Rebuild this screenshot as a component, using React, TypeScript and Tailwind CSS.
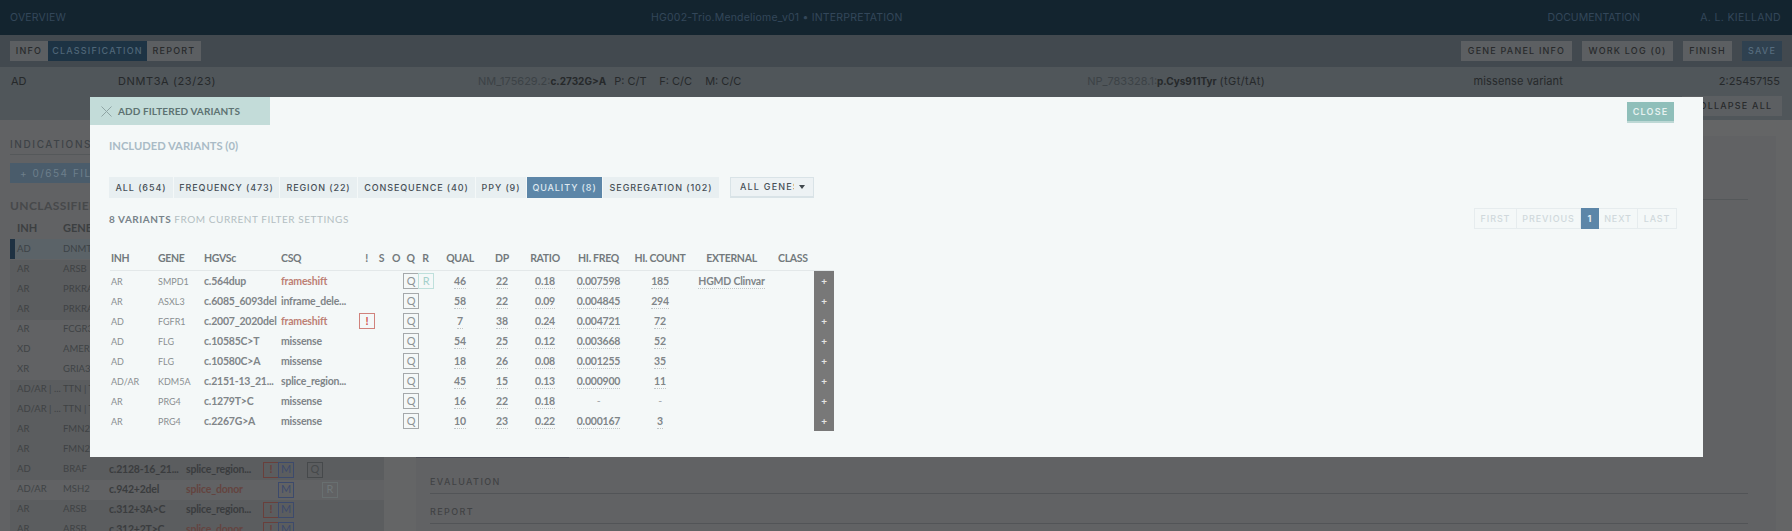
const grid = "grid grid-cols-[46px_46px_77px_80px_15px_15px_14px_15px_15px_54px_30px_56px_51px_72px_71px_47px_20px]";

const filterTabs = [
  { label: "ALL (654)", width: "w-[65px]" },
  { label: "FREQUENCY (473)", width: "w-[106px]" },
  { label: "REGION (22)", width: "w-[78px]" },
  { label: "CONSEQUENCE (40)", width: "w-[118px]" },
  { label: "PPY (9)", width: "w-[51px]" },
  { label: "QUALITY (8)", width: "w-[76px]", active: true },
  { label: "SEGREGATION (102)", width: "w-[117px]" },
];

const variants = [
  { inh: "AR", gene: "SMPD1", hgvs: "c.564dup", csq: "frameshift", red: true, r: true, qual: "46", dp: "22", ratio: "0.18", freq: "0.007598", count: "185", ext: "HGMD Clinvar" },
  { inh: "AR", gene: "ASXL3", hgvs: "c.6085_6093del", csq: "inframe_dele...", qual: "58", dp: "22", ratio: "0.09", freq: "0.004845", count: "294" },
  { inh: "AD", gene: "FGFR1", hgvs: "c.2007_2020del", csq: "frameshift", red: true, warn: true, qual: "7", dp: "38", ratio: "0.24", freq: "0.004721", count: "72" },
  { inh: "AD", gene: "FLG", hgvs: "c.10585C>T", csq: "missense", qual: "54", dp: "25", ratio: "0.12", freq: "0.003668", count: "52" },
  { inh: "AD", gene: "FLG", hgvs: "c.10580C>A", csq: "missense", qual: "18", dp: "26", ratio: "0.08", freq: "0.001255", count: "35" },
  { inh: "AD/AR", gene: "KDM5A", hgvs: "c.2151-13_21...", csq: "splice_region...", qual: "45", dp: "15", ratio: "0.13", freq: "0.000900", count: "11" },
  { inh: "AR", gene: "PRG4", hgvs: "c.1279T>C", csq: "missense", qual: "16", dp: "22", ratio: "0.18", freq: "-", count: "-" },
  { inh: "AR", gene: "PRG4", hgvs: "c.2267G>A", csq: "missense", qual: "10", dp: "23", ratio: "0.22", freq: "0.000167", count: "3" },
];

// rows of the list behind the modal
const backgroundRows = [
  { inh: "AR", gene: "ARSB", dark: true },
  { inh: "AR", gene: "PRKRA", dark: true },
  { inh: "AR", gene: "PRKRA", dark: true },
  { inh: "AR", gene: "FCGR3" },
  { inh: "XD", gene: "AMER1" },
  { inh: "XR", gene: "GRIA3" },
  { inh: "AD/AR | ...", gene: "TTN | T", dark: true },
  { inh: "AD/AR | ...", gene: "TTN | T", dark: true },
  { inh: "AR", gene: "FMN2", dark: true },
  { inh: "AR", gene: "FMN2", dark: true },
  { inh: "AD", gene: "BRAF", hgvs: "c.2128-16_21...", csq: "splice_region...", bang: true, m: true, q: true, dark: true },
  { inh: "AD/AR", gene: "MSH2", hgvs: "c.942+2del", csq: "splice_donor", red: true, m: true, r: true },
  { inh: "AR", gene: "ARSB", hgvs: "c.312+3A>C", csq: "splice_region...", bang: true, m: true, dark: true },
  { inh: "AR", gene: "ARSB", hgvs: "c.312+2T>C", csq: "splice_donor", red: true, bang: true, m: true, dark: true },
];

function DarkButton({ children, width, tone = "plain" }: { children: string; width: string; tone?: "plain" | "active" | "save" }) {
  const colours = {
    plain: "bg-[#5c5f62] text-[#282a2c]",
    active: "bg-[#1d3344] text-[#4f6678]",
    save: "bg-[#2f4150] text-[#566c7e]",
  };
  return (
    <div className={`${width} h-[20px] flex items-center justify-center whitespace-nowrap text-[9px] font-medium tracking-[1.2px] ${colours[tone]}`}>
      {children}
    </div>
  );
}

function Dotted({ children }: { children: string }) {
  return <span className="border-b border-dotted border-[#c3c7c8] leading-[14px] inline-block">{children}</span>;
}

function Badge({ children, className }: { children: string; className: string }) {
  return <div className={`w-[16px] h-[16px] border flex items-center justify-center text-[11px] ${className}`}>{children}</div>;
}

function Page() {
  return (
    <div className="w-[1792px] h-[531px] flex flex-col bg-[#646566] font-['Inter',sans-serif]">
      <div className="h-[35px] shrink-0 bg-[#13242f] flex items-center text-[10.5px] text-[#33475a] pl-[10px] pr-[11px]">
        <span className="w-[641px] tracking-[0.2px]">OVERVIEW</span>
        <span className="tracking-[0.2px]">HG002-Trio.Mendeliome_v01 • INTERPRETATION</span>
        <div className="flex-1 flex justify-end gap-[60px]">
          <span>DOCUMENTATION</span>
          <span className="tracking-[0.35px]">A. L. KIELLAND</span>
        </div>
      </div>
      <div className="h-[32px] shrink-0 bg-[#42494f] flex items-center justify-between px-[10px]">
        <div className="flex">
          <DarkButton width="w-[38px]">INFO</DarkButton>
          <DarkButton width="w-[99px]" tone="active">CLASSIFICATION</DarkButton>
          <DarkButton width="w-[54px]">REPORT</DarkButton>
        </div>
        <div className="flex gap-[10px]">
          <DarkButton width="w-[111px]">GENE PANEL INFO</DarkButton>
          <DarkButton width="w-[91px]">WORK LOG (0)</DarkButton>
          <DarkButton width="w-[49px]">FINISH</DarkButton>
          <DarkButton width="w-[40px]" tone="save">SAVE</DarkButton>
        </div>
      </div>
      <div className="h-[53px] shrink-0 bg-[#50565a] relative text-[11px] text-[#26292b] px-[10px] pt-[7px]">
        <div className="flex items-center h-[14px]">
          <span className="w-[108px] pl-[1px]">AD</span>
          <span className="w-[360px] tracking-[0.6px]">DNMT3A (23/23)</span>
          <span className="text-[#3c4246]">NM_175629.2:</span>
          <span className="font-bold text-[10px]">c.2732G&gt;A</span>
          <span className="ml-[8px] w-[45px]">P: C/T</span>
          <span className="w-[46px]">F: C/C</span>
          <span className="w-[382px]">M: C/C</span>
          <span className="text-[#3c4246]">NP_783328.1:</span>
          <span className="font-bold text-[10px]">p.Cys911Tyr</span>
          <span className="ml-[3px] w-[254px] tracking-[0.4px]">(tGt/tAt)</span>
          <span className="flex-1 tracking-[0.1px]">missense variant</span>
          <span className="pr-[2px]">2:25457155</span>
        </div>
        <div className="flex justify-end mt-[8px]">
          <DarkButton width="w-[100px]">COLLAPSE ALL</DarkButton>
        </div>
      </div>
      <div className="flex-1 flex min-h-0 overflow-hidden">
        <div className="w-[384px] shrink-0 pl-[10px] pt-[18px] bg-[#616264]">
          <div className="text-[10px] font-medium tracking-[1.6px] text-[#3e4347] border-b border-[#55585a] pb-[5px] h-[17px] leading-[12px]">INDICATIONS OVERVIEW</div>
          <div className="mt-[8px] w-[120px] h-[20px] bg-[#4a5c6b] text-[10px] text-[#6d7f8c] tracking-[1.5px] flex items-center pl-[10px] whitespace-nowrap">+ 0/654 FILTERED</div>
          <div className="mt-[14px] text-[12px] font-['Lato',sans-serif] font-bold text-[#47494b] tracking-[0.4px] h-[16px]">UNCLASSIFIED VARIANTS</div>
          <div className="mt-[7px] h-[19px] flex text-[11px] font-['Lato',sans-serif] font-bold text-[#3c3f41]">
            <span className="w-[53px] pl-[7px]">INH</span>
            <span>GENE</span>
          </div>
          <div className="h-[20px] bg-[#5b6368] border-l-[5px] border-[#1e3142] flex items-center text-[9.5px] text-[#3c4246] font-['Lato',sans-serif] mb-[0.5px]">
            <span className="w-[48px] pl-[2px]">AD</span>
            <span>DNMT3A</span>
          </div>
          {backgroundRows.map((row, i) => (
            <div key={i} className={`h-[20px] flex items-center text-[9.5px] text-[#3f4244] font-['Lato',sans-serif] ${row.dark ? "bg-[#5b5d5f]" : ""}`}>
              <span className="w-[53px] shrink-0 pl-[7px] whitespace-nowrap overflow-hidden">{row.inh}</span>
              <span className="w-[46px] shrink-0">{row.gene}</span>
              <span className="w-[77px] shrink-0 text-[10.5px] font-bold whitespace-nowrap tracking-[-0.2px] text-[#3a3c3e]">{row.hgvs}</span>
              <span className={`w-[77px] shrink-0 text-[10.5px] font-bold whitespace-nowrap tracking-[-0.2px] ${row.red ? "text-[#64443f]" : "text-[#3a3c3e]"}`}>{row.csq}</span>
              <div className="w-[15px] shrink-0">{row.bang && <Badge className="border-[#693f3b] text-[#693f3b] font-bold">!</Badge>}</div>
              <div className="w-[29px] shrink-0">{row.m && <Badge className="border-[#3c4a6c] text-[#3c4a6c]">M</Badge>}</div>
              <div className="w-[15px] shrink-0">{row.q && <Badge className="border-[#46494b] text-[#46494b]">Q</Badge>}</div>
              <div className="w-[15px] shrink-0">{row.r && <Badge className="border-[#686f70] text-[#6f7678]">R</Badge>}</div>
            </div>
          ))}
        </div>
        <div className="w-[32px] shrink-0" />
        <div className="flex-1 pl-[14px] pr-[28px] bg-[#616264] mt-[16px]">
          <div className="h-[64px] border-b border-[#55585a]" />
          <div className="h-[256px]" />
          <div className="h-[2px] w-[153px] -ml-[14px] bg-[#4c4e56]" />
          <div className="h-[36px] border-b border-[#525457] text-[9px] tracking-[1.4px] text-[#414345] font-medium flex items-end pb-[5px]">EVALUATION</div>
          <div className="h-[30px] border-b border-[#525457] text-[9px] tracking-[1.4px] text-[#414345] font-medium flex items-end pb-[5px]">REPORT</div>
        </div>
        <div className="w-[16px] shrink-0" />
      </div>
    </div>
  );
}

function Modal() {
  return (
    <div className="absolute left-[90px] top-[97px] w-[1613px] h-[360px] bg-[#f4f8f8] font-['Lato',sans-serif]">
      <div className="flex justify-between items-start">
        <div className="w-[180px] h-[28px] bg-[#c3dcd9] flex items-center pl-[11px] text-[#5d7272]">
          <svg width="11" height="11" viewBox="0 0 11 11" className="mr-[6px]" fill="none" stroke="#8fa5a4" strokeWidth="1">
            <path d="M0.5 0.5 L10.5 10.5 M10.5 0.5 L0.5 10.5" />
          </svg>
          <span className="text-[10px] font-bold tracking-[0.1px] whitespace-nowrap">ADD FILTERED VARIANTS</span>
        </div>
        <div className="mt-[5px] mr-[29px] w-[47px] h-[21px] bg-[#8fbfba] border-b-2 border-[#bdd8d5] flex items-center justify-center text-[9px] font-['Inter',sans-serif] font-semibold tracking-[1.2px] text-[#e6f1f0]">
          CLOSE
        </div>
      </div>
      <div className="pl-[19px] pr-[27px]">
        <div className="mt-[13px] h-[16px] leading-[16px] text-[11.2px] font-bold text-[#a9bbc6]">INCLUDED VARIANTS (0)</div>
        <div className="mt-[23px] flex items-center">
          <div className="flex h-[21px] bg-[#e8eff1]">
            {filterTabs.map((t) => (
              <div
                key={t.label}
                className={`${t.width} border-r border-[#f4f8f8] flex items-center justify-center text-[9px] font-['Inter',sans-serif] font-medium tracking-[0.9px] whitespace-nowrap ${t.active ? "bg-[#5c86a8] text-[#dfe9f0]" : "text-[#475057]"}`}
              >
                {t.label}
              </div>
            ))}
          </div>
          <div className="ml-[10px] w-[84px] h-[21px] bg-[#edf2f4] border border-[#d9e3e7] border-b-2 flex items-center pl-[9px] font-['Inter',sans-serif] text-[9px] font-medium tracking-[1.2px] text-[#475057] whitespace-nowrap">
            <span className="w-[54px] overflow-hidden">ALL GENES</span>
            <span className="ml-[5px] border-x-[3.5px] border-t-[4px] border-x-transparent border-t-[#3f474d]" />
          </div>
        </div>
        <div className="mt-[10px] flex items-center justify-between h-[21px]">
          <div className="pt-[2px] text-[10px] tracking-[0.55px] text-[#b3bec2] whitespace-nowrap">
            <span className="font-bold text-[#78838a]">8 VARIANTS</span> FROM CURRENT FILTER SETTINGS
          </div>
          <div className="flex h-[21px] font-['Inter',sans-serif] text-[9px] font-medium tracking-[0.9px] text-[#d0d8dc] mr-[-1px]">
            <div className="w-[43px] border border-[#e6ecee] flex items-center justify-center">FIRST</div>
            <div className="w-[64px] border-y border-r border-[#e6ecee] flex items-center justify-center">PREVIOUS</div>
            <div className="w-[18px] bg-[#5c86a8] text-[#e4edf3] font-bold flex items-center justify-center">1</div>
            <div className="w-[39px] border-y border-r border-[#e6ecee] flex items-center justify-center">NEXT</div>
            <div className="w-[39px] border-y border-r border-[#e6ecee] flex items-center justify-center">LAST</div>
          </div>
        </div>
        <div className="mt-[19px] ml-[1px] w-[724px] text-[#737a7d]">
          <div className={`${grid} h-[23px] text-[10.5px] tracking-[-0.3px] font-bold items-center border-b border-[#e3e8e9] pb-[1px]`}>
            <span className="pl-[1px]">INH</span>
            <span className="pl-[2px]">GENE</span>
            <span className="pl-[2px]">HGVSc</span>
            <span className="pl-[2px]">CSQ</span>
            <span className="text-center">!</span>
            <span className="text-center">S</span>
            <span className="text-center">O</span>
            <span className="text-center">Q</span>
            <span className="text-center">R</span>
            <span className="text-center">QUAL</span>
            <span className="text-center">DP</span>
            <span className="text-center">RATIO</span>
            <span className="text-center whitespace-nowrap">HI. FREQ</span>
            <span className="text-center whitespace-nowrap">HI. COUNT</span>
            <span className="text-center">EXTERNAL</span>
            <span className="pl-[11px]">CLASS</span>
          </div>
          {variants.map((v, i) => (
            <div key={i} className={`${grid} h-[20px] items-center text-[10.5px] tracking-[-0.2px] font-bold text-[#808588]`}>
              <span className="pl-[1px] pt-[1px] text-[9px] font-normal tracking-normal text-[#8a8f91]">{v.inh}</span>
              <span className="pl-[2px] pt-[1px] text-[9px] font-normal tracking-normal text-[#8a8f91]">{v.gene}</span>
              <span className="pl-[2px] pt-[1px] whitespace-nowrap">{v.hgvs}</span>
              <span className={`pl-[2px] pt-[1px] whitespace-nowrap ${v.red ? "text-[#bd8074]" : ""}`}>{v.csq}</span>
              <div>{v.warn && <Badge className="border-[#d0827c] text-[#d0524c] font-bold">!</Badge>}</div>
              <div />
              <div />
              <div><Badge className="border-[#a5a9ab] text-[#8d9395] font-normal">Q</Badge></div>
              <div>{v.r && <Badge className="border-[#bfe0dc] text-[#a4d0cb] font-normal">R</Badge>}</div>
              <div className="text-center pt-[1px]"><Dotted>{v.qual}</Dotted></div>
              <div className="text-center pt-[1px]"><Dotted>{v.dp}</Dotted></div>
              <div className="text-center pt-[1px]"><Dotted>{v.ratio}</Dotted></div>
              <div className="text-center pt-[1px]">{v.freq === "-" ? <span className="font-normal text-[#a5a9ab]">-</span> : <Dotted>{v.freq}</Dotted>}</div>
              <div className="text-center pt-[1px]">{v.count === "-" ? <span className="font-normal text-[#a5a9ab]">-</span> : <Dotted>{v.count}</Dotted>}</div>
              <div className="text-center pt-[1px] whitespace-nowrap">{v.ext && <Dotted>{v.ext}</Dotted>}</div>
              <div />
              <div className="h-[20px] bg-[#787878] text-[#e4e4e4] text-[10px] flex items-center justify-center">+</div>
            </div>
          ))}
        </div>
      </div>
    </div>
  );
}

export default function App() {
  return (
    <div className="relative w-[1792px] h-[531px] overflow-hidden">
      <Page />
      <Modal />
    </div>
  );
}
